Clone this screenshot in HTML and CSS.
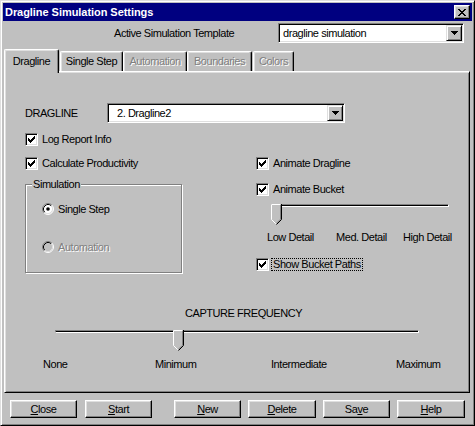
FILE: index.html
```html
<!DOCTYPE html>
<html>
<head>
<meta charset="utf-8">
<title>Dragline Simulation Settings</title>
<link rel="stylesheet" href="styles.css">
</head>
<body>
<div class="window">
  <div class="titlebar">
    <span class="title">Dragline Simulation Settings</span>
    <span class="close-btn"><svg width="8" height="7" viewBox="0 0 8 7" shape-rendering="crispEdges"><path d="M0 0h2v1H0zM6 0h2v1H6zM1 1h2v1H1zM5 1h2v1H5zM2 2h4v1H2zM3 3h2v1H3zM2 4h4v1H2zM1 5h2v1H1zM5 5h2v1H5zM0 6h2v1H0zM6 6h2v1H6z"/></svg></span>
  </div>

  <div class="template-row">
    <span class="template-label">Active Simulation Template</span>
    <div class="combo combo-template">
      <span class="combo-text">dragline simulation</span>
      <span class="combo-btn"><svg width="7" height="4" viewBox="0 0 7 4" shape-rendering="crispEdges"><path d="M0 0h7v1H0zM1 1h5v1H1zM2 2h3v1H2zM3 3h1v1H3z"/></svg></span>
    </div>
  </div>

  <div class="tabs">
    <div class="tab tab-active tab-dragline">Dragline</div>
    <div class="tab tab-single">Single Step</div>
    <div class="tab tab-auto disabled">Automation</div>
    <div class="tab tab-bound disabled">Boundaries</div>
    <div class="tab tab-colors disabled">Colors</div>
  </div>

  <div class="panel">
    <div class="dragline-row">
      <span class="dragline-label">DRAGLINE</span>
      <div class="combo combo-dragline">
        <span class="combo-text">2. Dragline2</span>
        <span class="combo-btn"><svg width="7" height="4" viewBox="0 0 7 4" shape-rendering="crispEdges"><path d="M0 0h7v1H0zM1 1h5v1H1zM2 2h3v1H2zM3 3h1v1H3z"/></svg></span>
      </div>
    </div>

    <div class="check-row row-log">
      <span class="cb"><svg width="7" height="7" viewBox="0 0 7 7" shape-rendering="crispEdges"><path d="M0 2h1v3H0zM1 3h1v3H1zM2 4h1v3H2zM3 3h1v3H3zM4 2h1v3H4zM5 1h1v3H5zM6 0h1v3H6z"/></svg></span>
      <span class="cb-label">Log Report Info</span>
    </div>

    <div class="mid">
      <div class="mid-left">
        <div class="check-row">
          <span class="cb"><svg width="7" height="7" viewBox="0 0 7 7" shape-rendering="crispEdges"><path d="M0 2h1v3H0zM1 3h1v3H1zM2 4h1v3H2zM3 3h1v3H3zM4 2h1v3H4zM5 1h1v3H5zM6 0h1v3H6z"/></svg></span>
          <span class="cb-label">Calculate Productivity</span>
        </div>
        <div class="group">
          <span class="group-legend">Simulation</span>
          <div class="radio-row radio-single">
            <svg class="radio" width="12" height="12" viewBox="0 0 12 12">
              <circle cx="6" cy="6" r="5" fill="#fff"/>
              <path d="M2.11 9.89A5.5 5.5 0 0 1 9.89 2.11" stroke="#808080" fill="none"/>
              <path d="M9.89 2.11A5.5 5.5 0 0 1 2.11 9.89" stroke="#fff" fill="none"/>
              <path d="M2.82 9.18A4.5 4.5 0 0 1 9.18 2.82" stroke="#000" fill="none"/>
              <path d="M9.18 2.82A4.5 4.5 0 0 1 2.82 9.18" stroke="#dfdfdf" fill="none"/>
              <circle cx="6" cy="6" r="1.8" fill="#000"/>
            </svg>
            <span class="cb-label">Single Step</span>
          </div>
          <div class="radio-row radio-auto">
            <svg class="radio" width="12" height="12" viewBox="0 0 12 12">
              <circle cx="6" cy="6" r="5" fill="#c0c0c0"/>
              <path d="M2.11 9.89A5.5 5.5 0 0 1 9.89 2.11" stroke="#808080" fill="none"/>
              <path d="M9.89 2.11A5.5 5.5 0 0 1 2.11 9.89" stroke="#fff" fill="none"/>
              <path d="M2.82 9.18A4.5 4.5 0 0 1 9.18 2.82" stroke="#000" fill="none"/>
              <path d="M9.18 2.82A4.5 4.5 0 0 1 2.82 9.18" stroke="#dfdfdf" fill="none"/>
            </svg>
            <span class="cb-label disabled">Automation</span>
          </div>
        </div>
      </div>

      <div class="mid-right">
        <div class="check-row">
          <span class="cb"><svg width="7" height="7" viewBox="0 0 7 7" shape-rendering="crispEdges"><path d="M0 2h1v3H0zM1 3h1v3H1zM2 4h1v3H2zM3 3h1v3H3zM4 2h1v3H4zM5 1h1v3H5zM6 0h1v3H6z"/></svg></span>
          <span class="cb-label">Animate Dragline</span>
        </div>
        <div class="check-row row-bucket">
          <span class="cb"><svg width="7" height="7" viewBox="0 0 7 7" shape-rendering="crispEdges"><path d="M0 2h1v3H0zM1 3h1v3H1zM2 4h1v3H2zM3 3h1v3H3zM4 2h1v3H4zM5 1h1v3H5zM6 0h1v3H6z"/></svg></span>
          <span class="cb-label">Animate Bucket</span>
        </div>
        <div class="slider slider-detail">
          <div class="track"></div>
          <svg class="thumb" style="left:0px" width="11" height="21" viewBox="0 0 11 21">
            <path d="M0.5 0.5H10.5V15.5L5.5 20.5L0.5 15.5Z" fill="#c0c0c0"/>
            <path d="M0.5 15.5V0.5H9.5" stroke="#fff" fill="none"/>
            <path d="M0.5 15.5L5 20" stroke="#fff" fill="none"/>
            <path d="M10.5 0V15.5L5.5 20.5" stroke="#000" fill="none"/>
            <path d="M9.5 1V15.2L5.3 19.4" stroke="#808080" fill="none"/>
          </svg>
        </div>
        <div class="detail-labels">
          <span>Low Detail</span>
          <span>Med. Detail</span>
          <span>High Detail</span>
        </div>
        <div class="check-row row-paths">
          <span class="cb"><svg width="7" height="7" viewBox="0 0 7 7" shape-rendering="crispEdges"><path d="M0 2h1v3H0zM1 3h1v3H1zM2 4h1v3H2zM3 3h1v3H3zM4 2h1v3H4zM5 1h1v3H5zM6 0h1v3H6z"/></svg></span>
          <span class="cb-label focus">Show Bucket Paths</span>
        </div>
      </div>
    </div>

    <div class="capture-title">CAPTURE FREQUENCY</div>
    <div class="slider slider-capture">
      <div class="track"></div>
      <svg class="thumb" style="left:118px" width="11" height="21" viewBox="0 0 11 21">
        <path d="M0.5 0.5H10.5V15.5L5.5 20.5L0.5 15.5Z" fill="#c0c0c0"/>
        <path d="M0.5 15.5V0.5H9.5" stroke="#fff" fill="none"/>
        <path d="M0.5 15.5L5 20" stroke="#fff" fill="none"/>
        <path d="M10.5 0V15.5L5.5 20.5" stroke="#000" fill="none"/>
        <path d="M9.5 1V15.2L5.3 19.4" stroke="#808080" fill="none"/>
      </svg>
    </div>
    <div class="capture-labels">
      <span>None</span>
      <span>Minimum</span>
      <span>Intermediate</span>
      <span>Maximum</span>
    </div>
  </div>

  <div class="buttons">
    <button class="btn btn-close"><u>C</u>lose</button>
    <button class="btn btn-start"><u>S</u>tart</button>
    <button class="btn btn-new"><u>N</u>ew</button>
    <button class="btn btn-delete"><u>D</u>elete</button>
    <button class="btn btn-save">Sa<u>v</u>e</button>
    <button class="btn btn-help"><u>H</u>elp</button>
  </div>
</div>
</body>
</html>
```

FILE: styles.css
```css
* {
  box-sizing: border-box;
}

html, body {
  margin: 0;
  padding: 0;
  background: #c0c0c0;
}

body {
  font-family: "Liberation Sans", Arial, sans-serif;
  font-size: 11px;
  line-height: 13px;
  letter-spacing: -0.45px;
  color: #000;
}

.window {
  width: 475px;
  height: 426px;
  background: #c0c0c0;
  border: 1px solid;
  border-color: #dfdfdf #000 #000 #dfdfdf;
  box-shadow: inset 1px 1px 0 #fff, inset -1px -1px 0 #808080;
  padding: 2px;
}

/* Title bar */
.titlebar {
  height: 18px;
  background: #000080;
  display: flex;
  align-items: center;
  padding: 0 2px;
}

.title {
  flex: 1;
  color: #fff;
  font-weight: bold;
  letter-spacing: -0.05px;
}

.close-btn {
  width: 16px;
  height: 14px;
  background: #c0c0c0;
  border: 1px solid;
  border-color: #fff #000 #000 #fff;
  box-shadow: inset -1px -1px 0 #808080, inset 1px 1px 0 #dfdfdf;
  display: flex;
  align-items: center;
  justify-content: center;
}

.close-btn svg,
.combo-btn svg,
.cb svg {
  display: block;
}

/* Template row */
.template-row {
  display: flex;
  align-items: center;
  height: 20px;
  margin-top: 2px;
}

.template-label {
  margin-left: 111px;
}

.combo {
  height: 20px;
  background: #fff;
  border: 1px solid;
  border-color: #808080 #fff #fff #808080;
  box-shadow: inset 1px 1px 0 #000, inset -1px -1px 0 #dfdfdf;
  padding: 1px;
  display: flex;
  align-items: center;
}

.combo-template {
  margin-left: auto;
  margin-right: 8px;
  width: 186px;
}

.combo-template .combo-text {
  padding-left: 3px;
}

.combo-text {
  flex: 1;
}

.combo-btn {
  width: 16px;
  height: 16px;
  background: #c0c0c0;
  border: 1px solid;
  border-color: #dfdfdf #000 #000 #dfdfdf;
  box-shadow: inset 1px 1px 0 #fff, inset -1px -1px 0 #808080;
  display: flex;
  align-items: center;
  justify-content: center;
}

/* Tabs */
.tabs {
  position: relative;
  z-index: 1;
  display: flex;
  align-items: flex-end;
  height: 22px;
  margin-top: 6px;
  padding-left: 1px;
}

.tab {
  height: 20px;
  padding-top: 3px;
  text-align: center;
  background: #c0c0c0;
  border-top: 1px solid #fff;
  border-left: 1px solid #fff;
  border-right: 1px solid #000;
  border-radius: 2px 2px 0 0;
  box-shadow: inset -1px 0 0 #808080, inset 1px 1px 0 #dfdfdf;
}

.tab-active {
  height: 24px;
  padding-top: 5px;
  margin-bottom: -2px;
}

.tab-dragline { width: 55px; }
.tab-single { width: 63px; margin-left: 1px; }
.tab-auto { width: 64px; }
.tab-bound { width: 65px; }
.tab-colors { width: 41px; margin-left: 1px; }

.disabled {
  color: #808080;
  text-shadow: 1px 1px 0 #fff;
}

/* Panel */
.panel {
  width: 466px;
  height: 322px;
  margin-left: 1px;
  border: 1px solid;
  border-color: #fff #000 #000 #fff;
  box-shadow: inset 1px 1px 0 #dfdfdf, inset -1px -1px 0 #808080;
  padding: 0 0 0 20px;
}

.dragline-row {
  display: flex;
  align-items: center;
  height: 20px;
  margin-top: 31px;
}

.dragline-label {
  width: 82px;
}

.combo-dragline {
  width: 238px;
}

.combo-dragline .combo-text {
  padding-left: 8px;
}

.check-row {
  display: flex;
  align-items: center;
  height: 13px;
  gap: 4px;
}

.row-log {
  margin-top: 10px;
}

.cb {
  width: 13px;
  height: 13px;
  flex: none;
  background: #fff;
  border: 1px solid;
  border-color: #808080 #fff #fff #808080;
  box-shadow: inset 1px 1px 0 #000, inset -1px -1px 0 #dfdfdf;
  display: flex;
  align-items: center;
  justify-content: center;
}

.cb-label {
  white-space: nowrap;
}

.mid {
  display: grid;
  grid-template-columns: 231px 1fr;
  margin-top: 11px;
}

/* Group box */
.group {
  width: 157px;
  height: 89px;
  margin-top: 14px;
  border: 1px solid #808080;
  box-shadow: 1px 1px 0 #fff, inset 1px 1px 0 #fff;
}

.group-legend {
  display: block;
  width: max-content;
  height: 13px;
  margin: -7px 0 0 6px;
  padding: 0 1px;
  background: #c0c0c0;
}

.radio-row {
  display: flex;
  align-items: center;
  gap: 4px;
  height: 12px;
  margin-left: 16px;
}

.radio {
  display: block;
  flex: none;
}

.radio-single {
  margin-top: 12px;
}

.radio-auto {
  margin-top: 26px;
}

/* Right column */
.row-bucket {
  margin-top: 13px;
}

.slider {
  position: relative;
  height: 21px;
}

.track {
  height: 3px;
  margin-top: 7px;
  background: #000;
  border: 1px solid;
  border-color: #808080 #fff #fff #808080;
}

.thumb {
  position: absolute;
  top: 0;
  display: block;
}

.slider-detail {
  width: 178px;
  margin-top: 8px;
  margin-left: 15px;
}

.detail-labels {
  display: grid;
  grid-template-columns: 69px 67px auto;
  margin-top: 6px;
  margin-left: 11px;
  white-space: nowrap;
}

.row-paths {
  margin-top: 14px;
}

.focus {
  outline: 1px dotted #000;
  outline-offset: 0;
  line-height: 11px;
  padding: 0 1px;
  margin-left: -1px;
}

/* Capture frequency */
.capture-title {
  margin-top: 34px;
  margin-left: 160px;
}

.slider-capture {
  width: 364px;
  margin-top: 10px;
  margin-left: 30px;
}

.capture-labels {
  display: grid;
  grid-template-columns: 112px 116px 125px auto;
  margin-top: 7px;
  margin-left: 18px;
  white-space: nowrap;
}

/* Buttons */
.buttons {
  display: flex;
  margin-top: 7px;
}

.btn {
  width: 67px;
  height: 18px;
  padding: 0;
  font-family: "Liberation Sans", Arial, sans-serif;
  font-size: 11px;
  line-height: 13px;
  letter-spacing: -0.45px;
  color: #000;
  background: #c0c0c0;
  border: 1px solid;
  border-color: #fff #000 #000 #fff;
  box-shadow: inset -1px -1px 0 #808080, inset 1px 1px 0 #dfdfdf;
  border-radius: 0;
  text-align: center;
}

.btn-close { margin-left: 7px; }
.btn-start { margin-left: 8px; }
.btn-new { margin-left: 22px; }
.btn-delete { margin-left: 7px; width: 68px; }
.btn-save { margin-left: 7px; }
.btn-help { margin-left: 7px; width: 68px; }
```
